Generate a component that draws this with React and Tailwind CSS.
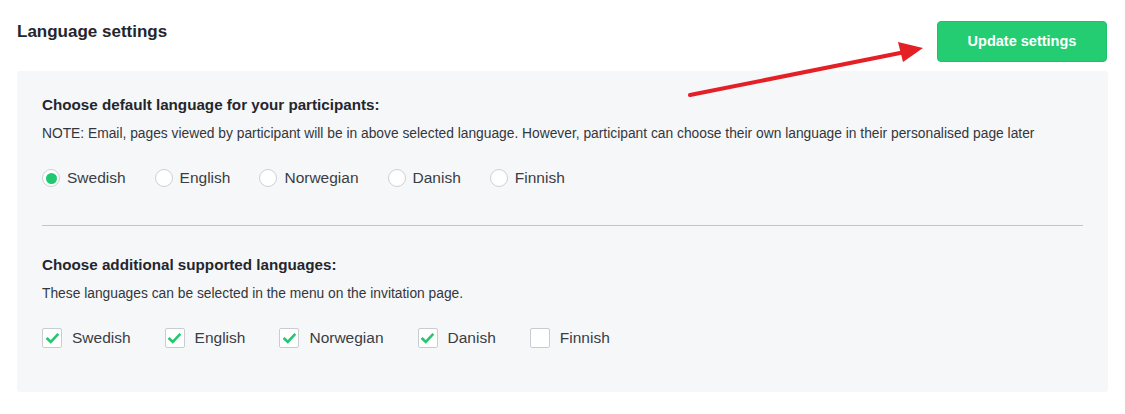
import React from "react";

const radios = ["Swedish", "English", "Norwegian", "Danish", "Finnish"];
const checks = [
  ["Swedish", true],
  ["English", true],
  ["Norwegian", true],
  ["Danish", true],
  ["Finnish", false],
];

function Radio({ checked }) {
  return (
    <span className="w-[18px] h-[18px] rounded-full border border-[#cdd0d5] bg-white flex items-center justify-center shrink-0">
      {checked && <span className="w-[11px] h-[11px] rounded-full bg-[#22c870]" />}
    </span>
  );
}

function Check({ checked }) {
  return (
    <span className="w-[20px] h-[20px] rounded-[2px] border border-[#c9ccd1] bg-white flex items-center justify-center shrink-0">
      {checked && (
        <svg width="13" height="11" viewBox="0 0 13 11">
          <path d="M1.5 5.8 L4.8 9 L11.5 1.8" fill="none" stroke="#22c870" strokeWidth="2.6" strokeLinecap="square" />
        </svg>
      )}
    </span>
  );
}

export default function App() {
  return (
    <div
      className="relative w-[1125px] h-[414px] bg-white text-[#2c2f36]"
      style={{ fontFamily: '"Liberation Sans", Arial, sans-serif' }}
    >
      <div className="flex justify-between items-start pl-[17px] pr-[18px] pt-[21px]">
        <h2 className="mt-[1px] text-[17px] leading-[20px] font-bold text-[#23262d]">Language settings</h2>
        <button className="w-[170px] h-[41px] rounded-[4px] bg-[#25cd72] border border-[#21bf69] text-white text-[14.5px] font-bold">
          Update settings
        </button>
      </div>

      <div className="mx-[17px] mt-[9px] bg-[#f6f7f9] rounded-[3px] px-[25px] pt-[24px] pb-[44px]">
        <h3 className="text-[15.2px] leading-[20px] font-bold text-[#23262d]">
          Choose default language for your participants:
        </h3>
        <p className="mt-[10px] text-[13.8px] leading-[18px] text-[#33363d]">
          NOTE: Email, pages viewed by participant will be in above selected language. However, participant can choose their own language in their personalised page later
        </p>
        <div className="mt-[25px] flex items-center gap-[29px] h-[20px]">
          {radios.map((r, i) => (
            <label key={r} className="flex items-center gap-[7px]">
              <Radio checked={i === 0} />
              <span className="text-[15.5px] leading-[20px] text-[#3a3d44]">{r}</span>
            </label>
          ))}
        </div>

        <div className="mt-[37px] h-px bg-[#c2c5cb]" />

        <h3 className="mt-[29px] text-[15.2px] leading-[20px] font-bold text-[#23262d]">
          Choose additional supported languages:
        </h3>
        <p className="mt-[10px] text-[13.8px] leading-[18px] text-[#33363d]">
          These languages can be selected in the menu on the invitation page.
        </p>
        <div className="mt-[25px] flex items-center gap-[34px] h-[20px]">
          {checks.map(([c, on]) => (
            <label key={c} className="flex items-center gap-[10px]">
              <Check checked={on} />
              <span className="text-[15.5px] leading-[20px] text-[#3a3d44]">{c}</span>
            </label>
          ))}
        </div>
      </div>

      <svg className="absolute left-0 top-0 pointer-events-none" width="1125" height="414">
        <line x1="690" y1="95" x2="905" y2="52" stroke="#e41f26" strokeWidth="4" strokeLinecap="round" />
        <polygon points="923,48 898,42 903,62" fill="#e41f26" />
      </svg>
    </div>
  );
}
